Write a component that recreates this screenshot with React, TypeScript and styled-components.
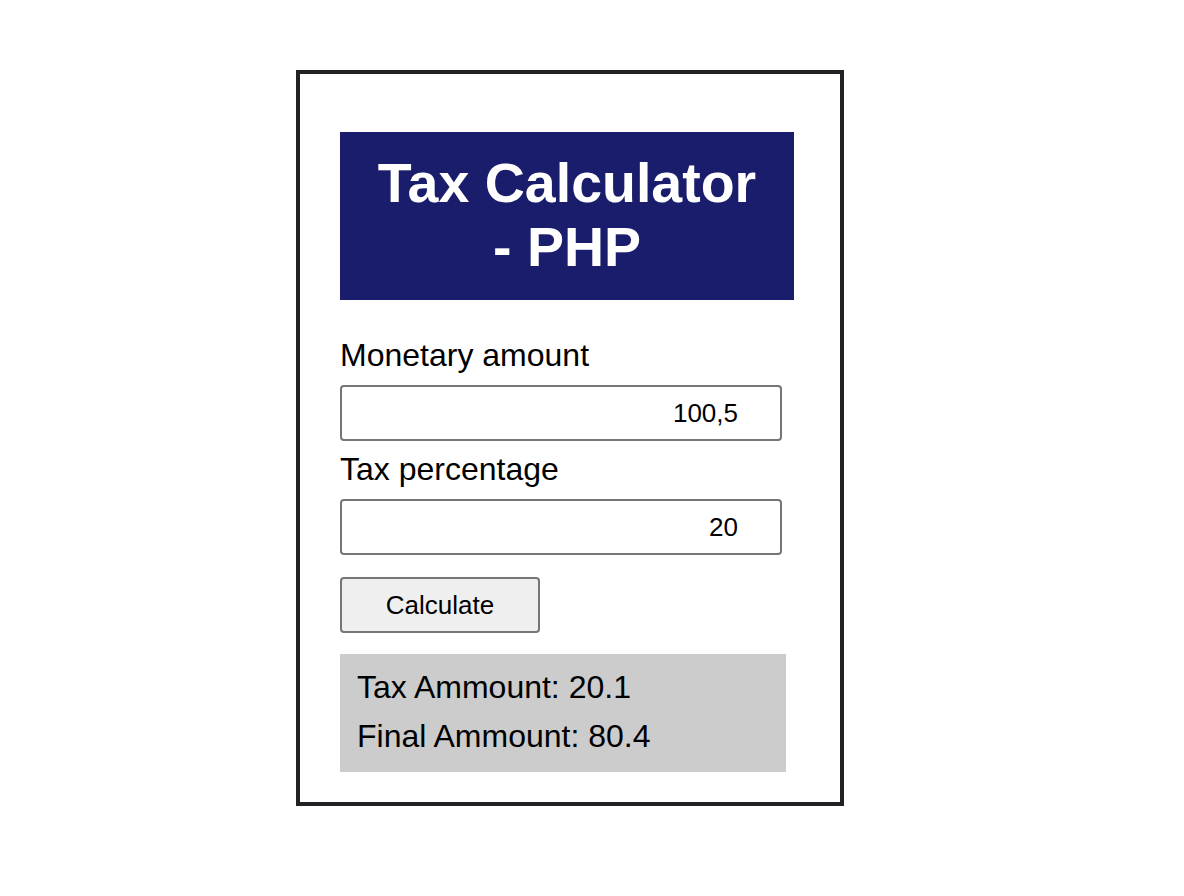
import React from "react";
import styled, { createGlobalStyle } from "styled-components";

const GlobalStyle = createGlobalStyle`
  html, body {
    margin: 0;
    padding: 0;
    background: #ffffff;
  }
  body {
    font-family: "Liberation Sans", Arial, Helvetica, sans-serif;
    color: #000000;
  }
`;

const Page = styled.div`
  padding: 70px 0 0 296px;
`;

const Card = styled.div`
  width: 548px;
  box-sizing: border-box;
  border: 4px solid #222226;
  padding: 58px 0 30px 40px;
  background: #ffffff;
`;

const Header = styled.h1`
  width: 454px;
  box-sizing: border-box;
  margin: 0;
  padding: 19px 22px 21px;
  background: #191d6c;
  color: #ffffff;
  font-size: 55.5px;
  font-weight: 700;
  line-height: normal;
  text-align: center;
`;

const Form = styled.form`
  display: flex;
  flex-direction: column;
  align-items: flex-start;
  margin-top: 37px;
`;

const Label = styled.label`
  display: block;
  font-size: 32px;
  line-height: 36px;
  margin: 0 0 12px;
`;

const Input = styled.input`
  width: 442px;
  height: 56px;
  box-sizing: border-box;
  margin: 0 0 10px;
  padding: 0 42px 0 12px;
  border: 2px solid #767676;
  border-radius: 4px;
  background: #ffffff;
  font-family: "Liberation Sans", Arial, sans-serif;
  font-size: 26px;
  color: #000000;
  text-align: right;
  outline: none;
`;

const Button = styled.button`
  width: 200px;
  height: 56px;
  box-sizing: border-box;
  margin-top: 12px;
  padding: 0;
  border: 2px solid #767676;
  border-radius: 4px;
  background: #efefef;
  font-family: "Liberation Sans", Arial, sans-serif;
  font-size: 26px;
  color: #000000;
  cursor: pointer;
`;

const Result = styled.div`
  width: 446px;
  height: 118px;
  box-sizing: border-box;
  margin-top: 21px;
  padding: 9px 16px 0 17px;
  background: #cccccc;
`;

const ResultLine = styled.p`
  margin: 0;
  font-size: 32px;
  line-height: 49px;
`;

export default function App() {
  return (
    <>
      <GlobalStyle />
      <Page>
        <Card>
          <Header>Tax Calculator - PHP</Header>
          <Form onSubmit={(e) => e.preventDefault()}>
            <Label htmlFor="amount">Monetary amount</Label>
            <Input id="amount" type="text" defaultValue="100,5" />
            <Label htmlFor="tax">Tax percentage</Label>
            <Input id="tax" type="text" defaultValue="20" />
            <Button type="submit">Calculate</Button>
          </Form>
          <Result>
            <ResultLine>Tax Ammount: 20.1</ResultLine>
            <ResultLine>Final Ammount: 80.4</ResultLine>
          </Result>
        </Card>
      </Page>
    </>
  );
}
